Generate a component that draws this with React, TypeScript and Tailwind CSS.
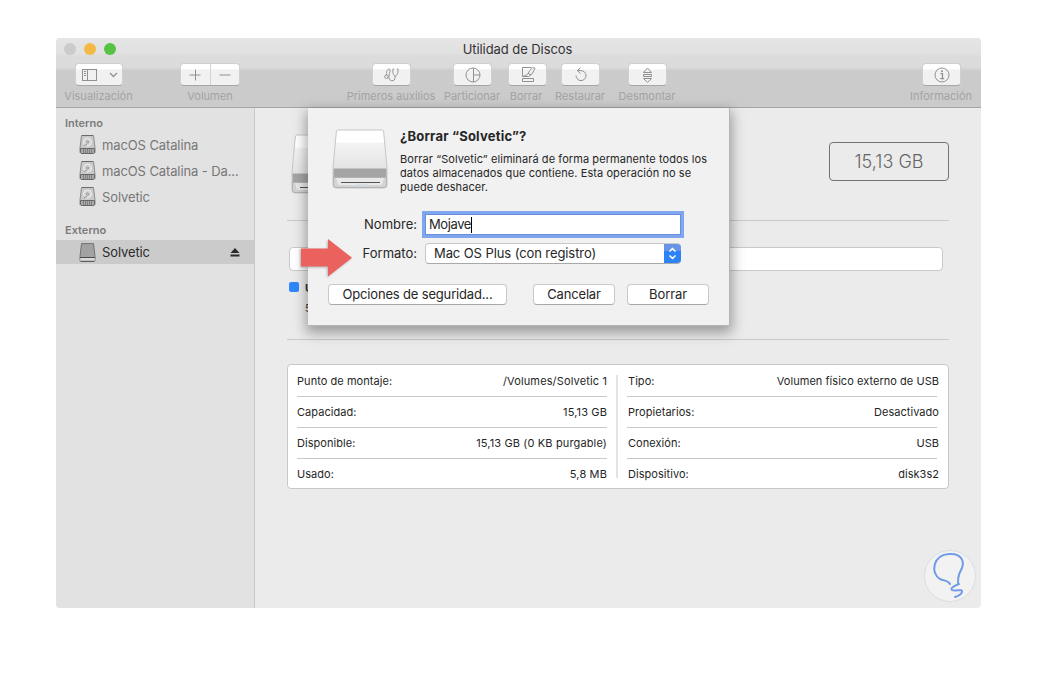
import React from 'react';

type ToolProps = {
  label: string;
  className: string;
  buttonClass?: string;
  labelClass?: string;
  children: React.ReactNode;
};

const BUTTON_BG = 'bg-[linear-gradient(#ffffff_0,#ffffff_5px,#f1f1f1_6px)]';

const ToolItem = ({ label, className, buttonClass = 'w-[39px]', labelClass = '', children }: ToolProps) => (
  <div className={`flex shrink-0 flex-col items-center ${className}`}>
    <div
      className={`flex h-[23px] items-center justify-center rounded-[4px] border border-[#d0d0d0] border-b-[#a6a6a6] text-[#909090] ${BUTTON_BG} ${buttonClass}`}
    >
      {children}
    </div>
    <span className={`mt-[2px] text-[11px] leading-[16px] whitespace-nowrap text-[#a3a3a3] ${labelClass}`}>{label}</span>
  </div>
);

const iconProps = { fill: 'none', stroke: 'currentColor', strokeWidth: 1 };

const SidebarIcon = () => (
  <svg width="15" height="12" viewBox="0 0 15 12" {...iconProps}>
    <rect x="0.5" y="0.5" width="14" height="11" />
    <path d="M5.5 0.5v11M2 2.5h2M2 4.5h2M2 6.5h2" />
  </svg>
);

const FirstAidIcon = () => (
  <svg width="16" height="14" viewBox="0 0 16 14" {...iconProps}>
    <circle cx="2.4" cy="8.8" r="1.7" />
    <path d="M2.4 7.1C2.4 3.4 3.2 1 4.8 1c2.4 0 .7 3.4.4 5-.5 2.400-.5 6.500 2.500 6.800 2.500.2 3.300-1.500 3.300-3.300V8" />
    <path d="M10.200 1H9.100c-.9 3 .4 7 2.100 7s3.500-4 2.700-7h-1.200" />
  </svg>
);

const PartitionIcon = () => (
  <svg width="16" height="16" viewBox="0 0 16 16" {...iconProps}>
    <circle cx="8" cy="8" r="7" />
    <path d="M8.5 1v14M8.5 8H15" />
  </svg>
);

const EraseIcon = () => (
  <svg width="16" height="15" viewBox="0 0 16 15" {...iconProps}>
    <path d="M11.500.5h-9v9h2.500" />
    <path d="M15 1.200l-2.500-.5C10.500 2.500 9 4.500 8 6.500 7 8.500 5 8.300 3 9.500h5.500C12 8.500 13.500 4 15 1.200zM8 6.500l3 1.200" />
    <path d="M2.500 11.500h11v3h-11z" />
  </svg>
);

const RestoreIcon = () => (
  <svg width="14" height="15" viewBox="0 0 14 15" {...iconProps}>
    <path d="M2 8.600a5 5 0 1 0 5-5H3.500M6.500.600l-3.100 3 3.100 3" />
  </svg>
);

const UnmountIcon = () => (
  <svg width="11" height="16" viewBox="0 0 11 16" {...iconProps}>
    <path d="M1.500 5.500 5.500 1l4 4.500zM1.500 7.500h8v2h-8zM1.500 11.500h8l-4 3.900z" />
  </svg>
);

const InfoIcon = () => (
  <svg width="16" height="16" viewBox="0 0 16 16" {...iconProps}>
    <circle cx="8" cy="8" r="7" />
    <path d="M6.500 6.700h2v5M6.300 11.700h3.900" strokeWidth="1.300" />
    <circle cx="8" cy="4.300" r="1" fill="currentColor" stroke="none" />
  </svg>
);

const InternalDisk = () => (
  <svg width="17" height="19" viewBox="0 0 17 19" className="-mt-px shrink-0">
    <path d="M2.500.5h12L16 13v4.500l-1 1H2l-1-1V13z" fill="#c9c9c9" stroke="#8c8c8c" />
    <path d="M3 .5h11" stroke="#6a6a6a" />
    <circle cx="8.500" cy="7" r="4" fill="#d6d6d6" stroke="#ececec" />
    <circle cx="8.500" cy="7" r="1.200" fill="#c9c9c9" stroke="#8f8f8f" strokeWidth=".8" />
    <path d="M5 10.500l3-1" stroke="#8f8f8f" />
    <path d="M1.500 13.500h14v4l-1 1h-12l-1-1z" fill="#a9a9a9" stroke="#686868" />
    <path d="M4.500 14v4M6.500 14v4M8.500 14v4M10.500 14v4M12.500 14v4" stroke="#777" strokeWidth=".8" />
  </svg>
);

const ExternalDisk = () => (
  <svg width="17" height="19" viewBox="0 0 17 19" className="shrink-0">
    <path d="M2.500.600h12L16 13.500v4l-1 1H2l-1-1v-4z" fill="#a2a2a2" stroke="#737373" />
    <path d="M1.300 15h14.400v2.500l-.8.900H2.100l-.8-.9z" fill="#dadada" />
    <path d="M1 14.500h15M1.500 18.300h14" stroke="#4a4a4a" />
  </svg>
);

const DriveIcon = () => (
  <svg width="56" height="62" viewBox="0 0 56 62">
    <defs>
      <linearGradient id="driveTop" x1="0" y1="0" x2="0" y2="1">
        <stop offset="0" stopColor="#ffffff" />
        <stop offset=".21" stopColor="#ffffff" />
        <stop offset=".23" stopColor="#f3f3f3" />
        <stop offset="1" stopColor="#d9d9d9" />
      </linearGradient>
    </defs>
    <path d="M6 2h44q1.500 0 1.700 2L55 40v17q0 3-3 3H4q-3 0-3-3V40L4.300 4Q4.500 2 6 2z" fill="url(#driveTop)" stroke="#c3c7cb" />
    <path d="M1.500 40.500h53v9h-53z" fill="#a5a5a5" />
    <path d="M1.500 49.500h53V57q0 2.500-2.500 2.500H4Q1.500 59.500 1.500 57z" fill="#d3d3d3" stroke="#b3b3b3" />
    <path d="M4 50h48l-2 7H6z" fill="#e9e9e9" />
    <path d="M9 54.500h39" stroke="#555" />
    <path d="M15 58.500l10-2h9l8 2z" fill="#cfdae0" />
  </svg>
);

const Arrow = () => (
  <svg
    width="52"
    height="38"
    viewBox="0 0 52 38"
    className="absolute top-[201px] left-[245px] drop-shadow-[-1px_1px_1px_rgba(0,0,0,0.25)]"
  >
    <path d="M0 9.500h27V0l24 18.800L27 37.500v-10H0z" fill="#ea615e" />
  </svg>
);

const VolumeRow = ({ name, selected }: { name: string; selected?: boolean }) => (
  <div className={`flex items-center pl-[23px] ${selected ? 'h-6 bg-[#cbcbcb] text-[#2b2b2b]' : 'h-[26px] text-[#777]'}`}>
    {selected ? <ExternalDisk /> : <InternalDisk />}
    <span className="ml-[6px] w-[145px] pt-[2px] text-[13px] tracking-[-0.11px] whitespace-nowrap">{name}</span>
    {selected && (
      <svg width="10" height="9" viewBox="0 0 10 9" fill="#2b2b2b" className="-ml-[17px]">
        <path d="M5 0l4.500 5h-9zM.500 6.500h9v2h-9z" />
      </svg>
    )}
  </div>
);

const leftRows = [
  ['Punto de montaje:', '/Volumes/Solvetic 1'],
  ['Capacidad:', '15,13 GB'],
  ['Disponible:', '15,13 GB (0 KB purgable)'],
  ['Usado:', '5,8 MB'],
];

const rightRows = [
  ['Tipo:', 'Volumen físico externo de USB'],
  ['Propietarios:', 'Desactivado'],
  ['Conexión:', 'USB'],
  ['Dispositivo:', 'disk3s2'],
];

const InfoColumn = ({ rows, labelClass = '', valueClass = '' }: { rows: string[][]; labelClass?: string; valueClass?: string }) => (
  <div className="flex w-[310px] flex-col divide-y divide-[#c8c8c8]">
    {rows.map(([label, value], i) => (
      <div key={label} className={`flex shrink-0 items-center justify-between ${i === 0 ? 'h-8 pt-[2px]' : 'h-[31px]'}`}>
        <span className={labelClass}>{label}</span>
        <span className={valueClass}>{value}</span>
      </div>
    ))}
  </div>
);

const DialogButton = ({ label, className }: { label: string; className: string }) => (
  <button
    className={`h-[21px] rounded-[4px] border border-[#c9c9c9] border-b-[#a9a9a9] bg-white text-[13px] leading-[19px] whitespace-nowrap ${className}`}
  >
    {label}
  </button>
);

const EraseDialog = () => (
  <div className="absolute top-0 left-[252px] h-[217.500px] w-[422px] border-r border-b border-[#b5b5b5] bg-[#f1f1f1] text-[#262626] shadow-[0_5px_12px_2px_rgba(0,0,0,0.34)]">
    <div className="flex pt-[20px] pl-6">
      <DriveIcon />
      <div className="-mt-px ml-[12px] w-[320px]">
        <h2 className="text-[13px] leading-[18px] font-bold tracking-[0.21px]">¿Borrar “Solvetic”?</h2>
        <p className="mt-[7px] text-[11px] leading-[14px] tracking-[0.08px] whitespace-nowrap">
          Borrar “Solvetic” eliminará de forma permanente todos los
          <br />
          datos almacenados que contiene. Esta operación no se
          <br />
          puede deshacer.
        </p>
      </div>
    </div>
    <div className="mt-[20px] flex items-center text-[13px]">
      <span className="w-[109px] text-right">Nombre:</span>
      <div className="ml-[8px] flex h-[21px] w-[256px] items-center border border-[#6b8fdc] bg-white pl-[3px] tracking-[-0.4px] shadow-[0_0_0_3px_#80a6f0]">
        Mojave
        <span className="h-4 w-px bg-black" />
      </div>
    </div>
    <div className="mt-[8px] flex items-center text-[13px]">
      <span className="w-[109px] text-right">Formato:</span>
      <div className="ml-[8px] flex h-[21px] w-[256px] items-center justify-between overflow-hidden rounded-[4px] border border-r-0 border-[#c9c9c9] border-b-[#a9a9a9] bg-white pl-2">
        <span className="tracking-[-0.09px]">Mac OS Plus (con registro)</span>
        <div className="-my-px flex h-[21px] w-[17px] items-center justify-center bg-[linear-gradient(#6694e6_0,#6694e6_8px,#2b83f6_8px)]">
          <svg width="9" height="13" viewBox="0 0 9 13" fill="none" stroke="white" strokeWidth="1.500">
            <path d="M1.500 4.500l3-3 3 3M1.500 8.500l3 3 3-3" />
          </svg>
        </div>
      </div>
    </div>
    <div className="mt-[20px] flex pl-5">
      <DialogButton label="Opciones de seguridad..." className="w-[179px] tracking-[-0.17px]" />
      <DialogButton label="Cancelar" className="ml-[26px] w-[82px] tracking-[-0.18px]" />
      <DialogButton label="Borrar" className="ml-[12px] w-[82px] tracking-[-0.1px]" />
    </div>
  </div>
);

const Toolbar = () => (
  <div className="h-[70px] border-b border-[#a4a4a4] bg-[linear-gradient(#e5e5e5_0,#e1e1e1_15px,#dcdcdc_18px,#dbdbdb_29px,#cbcbcb_33px,#cbcbcb_100%)]">
    <div className="relative flex h-[22px] items-center justify-center">
      <div className="absolute left-2 flex gap-2">
        <span className="size-3 rounded-full bg-[#cbcbcb]" />
        <span className="size-3 rounded-full bg-[#f4b844]" />
        <span className="size-3 rounded-full bg-[#57c343]" />
      </div>
      <span className="pt-[2px] pr-[2px] text-[13px] tracking-[-0.07px] text-[#333]">Utilidad de Discos</span>
    </div>
    <div className="flex pt-[3px] pl-2">
      <ToolItem label="Visualización" className="w-[69px]" buttonClass="w-[48px] gap-[12px] pl-[2px]">
        <SidebarIcon />
        <svg width="9" height="6" viewBox="0 0 9 6" {...iconProps} strokeWidth={1.3}>
          <path d="M1 1l3.500 3.500L8 1" />
        </svg>
      </ToolItem>
      <ToolItem label="Volumen" className="ml-[47px] w-[60px]" buttonClass="w-[60px]">
        <div className="flex flex-1 justify-center">
          <svg width="12" height="12" viewBox="0 0 12 12" {...iconProps}>
            <path d="M6.500.500v11M.500 6h11" />
          </svg>
        </div>
        <div className="h-[21px] w-px bg-[#d3d3d3]" />
        <div className="flex flex-1 justify-center">
          <svg width="12" height="12" viewBox="0 0 12 12" {...iconProps}>
            <path d="M.500 6h11" />
          </svg>
        </div>
      </ToolItem>
      <ToolItem label="Primeros auxilios" className="ml-[106px] w-[90px]" buttonClass="w-[39px] pl-px">
        <FirstAidIcon />
      </ToolItem>
      <ToolItem label="Particionar" className="ml-[7px] w-[58px]" buttonClass="w-[39px] pl-[2px]">
        <PartitionIcon />
      </ToolItem>
      <ToolItem label="Borrar" className="ml-[7px] w-[39px]" buttonClass="w-[39px] pl-px" labelClass="-ml-[3px]">
        <EraseIcon />
      </ToolItem>
      <ToolItem label="Restaurar" className="ml-[7px] w-[52px]" buttonClass="w-[39px] pl-px">
        <RestoreIcon />
      </ToolItem>
      <ToolItem label="Desmontar" className="ml-[12px] w-[58px]" buttonClass="w-[39px] pl-px">
        <UnmountIcon />
      </ToolItem>
      <ToolItem label="Información" className="ml-[234px] w-[62px]" buttonClass="w-[39px] pl-px">
        <InfoIcon />
      </ToolItem>
    </div>
  </div>
);

export default function App() {
  return (
    <div className="h-[682px] w-[1037px] overflow-hidden bg-white pt-[38px] pl-14 font-['Inter','Liberation_Sans',sans-serif]">
      <div className="relative h-[570px] w-[925px] overflow-hidden rounded-[4px] bg-[#ebebeb]">
        <Toolbar />
        <div className="relative flex h-[500px]">
          <aside className="w-[199px] border-r border-[#cacaca] bg-[#e2e2e2]">
            <h3 className="pt-[8px] pl-[9px] text-[11px] leading-[14px] font-semibold text-[#7b7b7b]">Interno</h3>
            <div className="mt-[2px]">
              <VolumeRow name="macOS Catalina" />
              <VolumeRow name="macOS Catalina - Da..." />
              <VolumeRow name="Solvetic" />
            </div>
            <h3 className="mt-[13px] mb-[3px] pl-[9px] text-[11px] leading-[14px] font-semibold text-[#7b7b7b]">Externo</h3>
            <VolumeRow name="Solvetic" selected />
          </aside>

          <main className="w-[726px] pr-8 pl-8">
            <div className="flex h-[113px] items-start justify-between border-b border-[#c9c9c9] pt-[25px]">
              <div className="ml-[4px]">
                <DriveIcon />
              </div>
              <div className="mt-[9px] flex h-[39px] w-[120px] items-center justify-center rounded-[4px] border border-[#737373] text-[18px] font-light tracking-[0px] text-[#666]">
                15,13 GB
              </div>
            </div>
            <div className="mt-[26px] ml-[2px] h-[24px] w-[654px] rounded-[4px] border border-[#c9c9c9] bg-white" />
            <div className="mt-[11px] ml-[2px] flex">
              <span className="size-[10px] rounded-[2px] bg-[#2f87fa]" />
              <div className="ml-[6px] text-[11px] leading-[14px] text-[#333]">
                <div className="-mt-px font-bold">Usado</div>
                <div className="mt-[6px]">5,8 MB</div>
              </div>
            </div>
            <div className="mt-[24px] h-px bg-[#c9c9c9]" />
            <div className="mt-[24px] flex h-[125px] w-[662px] rounded-[4px] border border-[#c8c8c8] bg-white pl-[9px] text-[11px] text-[#262626]">
              <InfoColumn rows={leftRows} labelClass="tracking-[0.05px]" valueClass="tracking-[0.14px]" />
              <div className="mt-[10px] mr-[9px] ml-[9px] h-[103px] w-[2px] bg-[#e4e4e4]" />
              <InfoColumn rows={rightRows} labelClass="pl-px tracking-[0.05px]" valueClass="-mr-[2px] tracking-[0.04px]" />
            </div>
          </main>

          <EraseDialog />
        </div>

        <Arrow />

        <div className="absolute right-[5px] bottom-[6px] flex size-[52px] items-center justify-center rounded-full border border-[#d8dfe5] bg-[#f2f2f2]">
          <svg width="50" height="50" viewBox="0 0 50 50" fill="none" stroke="#719be7" strokeWidth="2" strokeLinecap="round">
            <path d="M25 33c-2-4-6-3-10-5C5 22 8 4 24 3c11-1 16 6 13 14-3 6-4 8-4 15" />
            <path d="M34 33c-5 2-9 4-7 6 3 2 11-2 10 2-1 3-4 4-7 5" />
          </svg>
        </div>
      </div>
    </div>
  );
}
